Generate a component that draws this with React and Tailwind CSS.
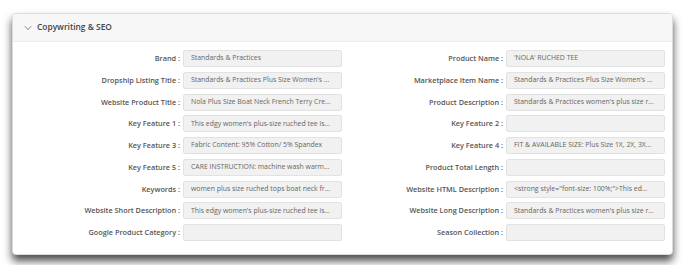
import React from "react";

const left = [
  ["Brand", "Standards & Practices"],
  ["Dropship Listing Title", "Standards & Practices Plus Size Women's ..."],
  ["Website Product Title", "Nola Plus Size Boat Neck French Terry Cre..."],
  ["Key Feature 1", "This edgy women's plus-size ruched tee is..."],
  ["Key Feature 3", "Fabric Content: 95% Cotton/ 5% Spandex"],
  ["Key Feature 5", "CARE INSTRUCTION: machine wash warm..."],
  ["Keywords", "women plus size ruched tops boat neck fr..."],
  ["Website Short Description", "This edgy women's plus-size ruched tee is..."],
  ["Google Product Category", ""],
];

const right = [
  ["Product Name", "'NOLA' RUCHED TEE"],
  ["Marketplace Item Name", "Standards & Practices Plus Size Women's ..."],
  ["Product Description", "Standards & Practices women's plus size r..."],
  ["Key Feature 2", ""],
  ["Key Feature 4", "FIT & AVAILABLE SIZE: Plus Size 1X, 2X, 3X..."],
  ["Product Total Length", ""],
  ["Website HTML Description", "<strong style=\"font-size: 100%;\">This ed..."],
  ["Website Long Description", "Standards & Practices women's plus size r..."],
  ["Season Collection", ""],
];

function Column({ rows }) {
  return (
    <div className="flex w-[323px] flex-col gap-[4.75px]">
      {rows.map(([label, value]) => (
        <div key={label} className="flex items-center">
          <div className="flex-1 pr-[3px] text-right text-[7.3px] font-semibold text-[#555] whitespace-nowrap">
            {label} :
          </div>
          <div className="flex h-[17px] w-[159px] items-center overflow-hidden whitespace-nowrap rounded-[2px] border border-[#e2e2e2] bg-[#f1f1f1] pl-[7px] text-[6.9px] text-[#666]">
            {value}
          </div>
        </div>
      ))}
    </div>
  );
}

export default function App() {
  return (
    <div
      className="h-[265px] w-[688px] bg-white pt-[13px] pl-[12px]"
      style={{ fontFamily: "'Open Sans', 'Liberation Sans', sans-serif" }}
    >
      <div className="w-[661px] overflow-hidden rounded-[4px] border border-[#dcdcdc] bg-white shadow-[0_6px_8px_rgba(0,0,0,0.7)]">
        <div className="flex h-[28px] items-center border-b border-[#ececec] bg-[#f7f7f7] pl-[11px]">
          <svg width="8" height="6" viewBox="0 0 8 6" className="mr-[5px]">
            <path d="M0.8 1.2 L4 4.6 L7.2 1.2" fill="none" stroke="#777" strokeWidth="0.9" />
          </svg>
          <span className="text-[8.4px] font-semibold text-[#444]">Copywriting &amp; SEO</span>
        </div>
        <div className="flex pt-[8px] pb-[13px] pl-[6px]">
          <Column rows={left} />
          <Column rows={right} />
        </div>
      </div>
    </div>
  );
}
